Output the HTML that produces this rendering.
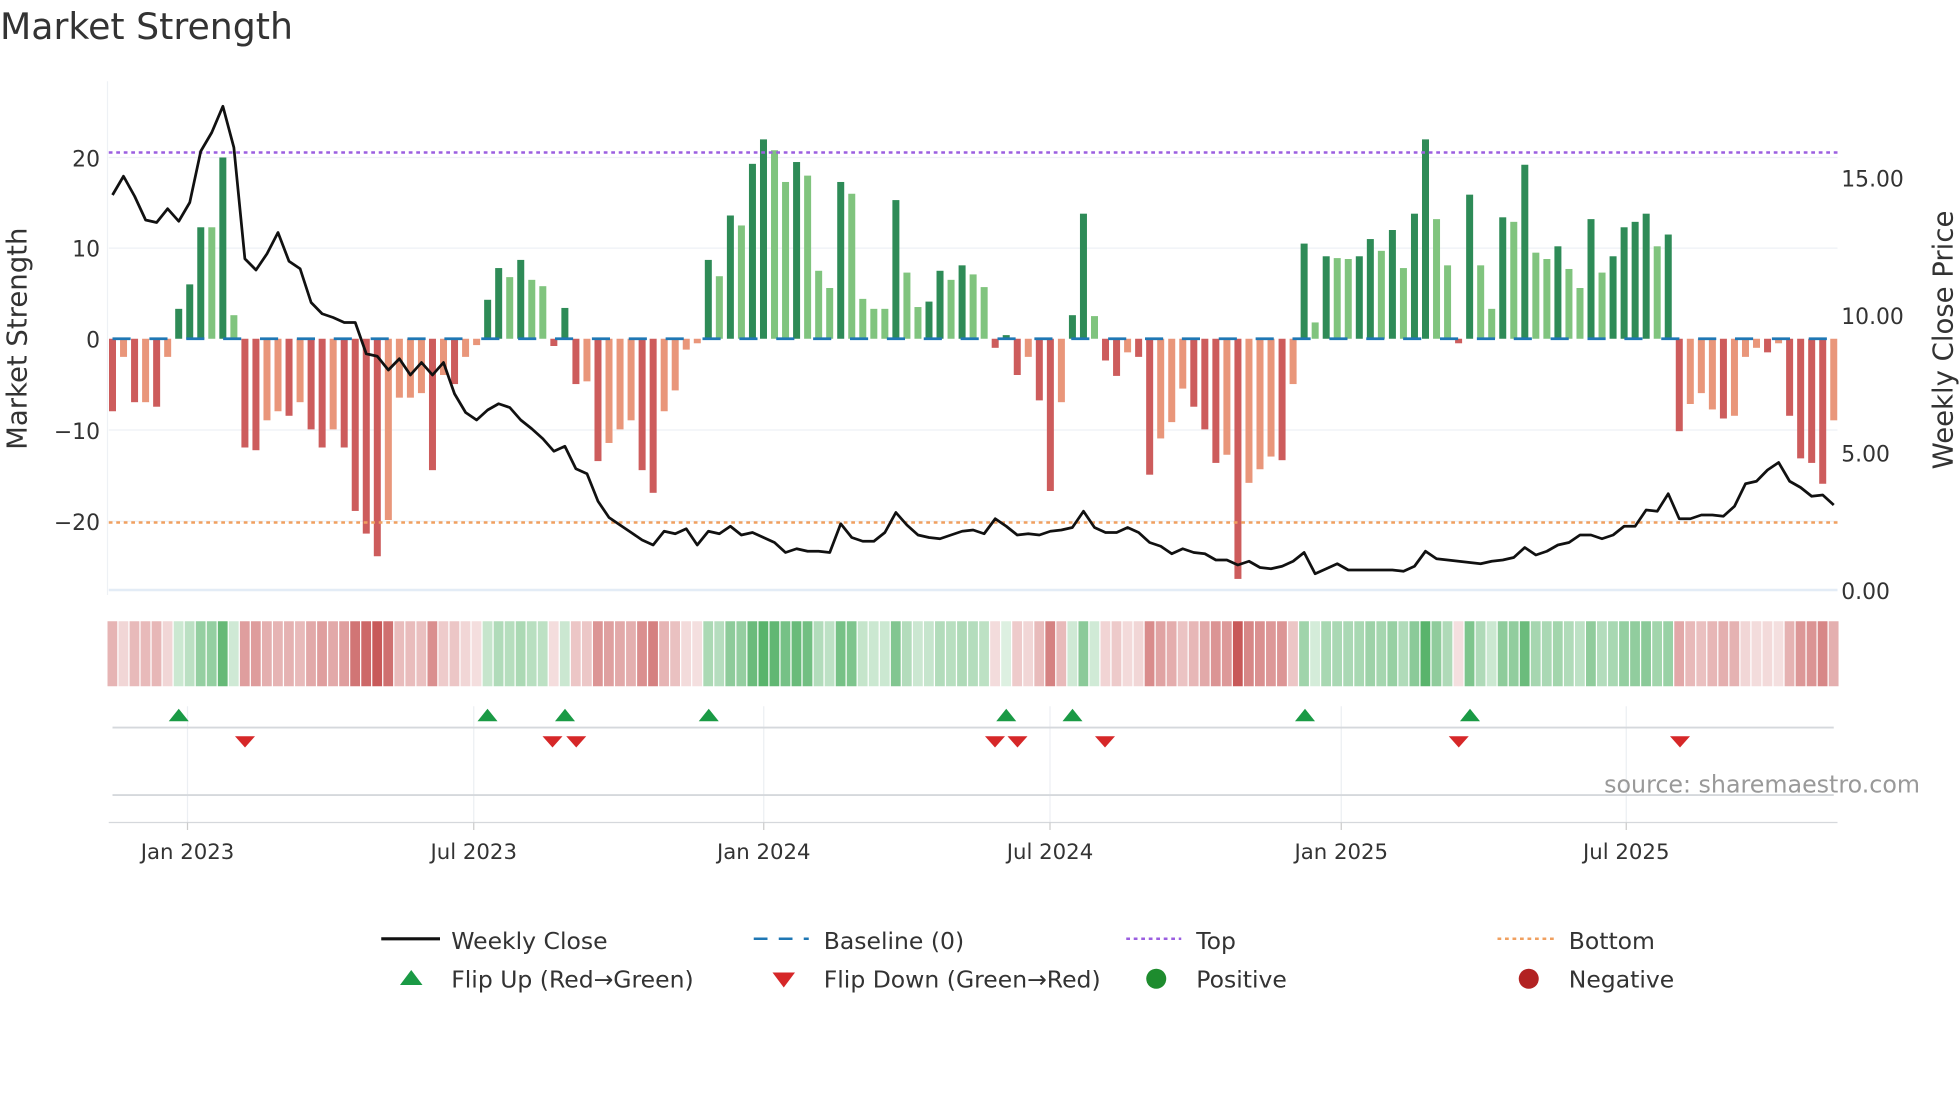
<!DOCTYPE html>
<html><head><meta charset="utf-8"><style>
html,body{margin:0;padding:0;background:#fff;width:1960px;height:1102px;overflow:hidden}
svg{display:block}
text{font-family:"DejaVu Sans","Liberation Sans",sans-serif;fill:#333}
</style></head><body>
<svg id="s" width="1960" height="1102" viewBox="0 0 1568 881.6" xmlns="http://www.w3.org/2000/svg">
<rect width="1568" height="882" fill="#fff"/>
<text x="0" y="31" font-size="29">Market Strength</text>
<g id="grid" stroke="#eef1f5" stroke-width="1">
<line x1="87" x2="1470" y1="126" y2="126"/><line x1="87" x2="1470" y1="198.5" y2="198.5"/>
<line x1="87" x2="1470" y1="344" y2="344"/><line x1="87" x2="1470" y1="417" y2="417"/>
<line x1="87" x2="1470" y1="472" y2="472" stroke="#e3ecf6" stroke-width="2"/>
<line x1="86" x2="86" y1="65" y2="476"/>
</g>
<g font-size="17.5" text-anchor="end">
<text x="80" y="133">20</text><text x="80" y="205">10</text><text x="80" y="278">0</text>
<text x="80" y="351">−10</text><text x="80" y="424">−20</text>
</g>
<g font-size="17.5">
<text x="1473" y="149">15.00</text><text x="1473" y="259">10.00</text><text x="1473" y="369">5.00</text><text x="1473" y="479">0.00</text>
</g>
<text transform="translate(21,271) rotate(-90)" font-size="22" text-anchor="middle">Market Strength</text>
<text transform="translate(1562,272) rotate(-90)" font-size="22" text-anchor="middle">Weekly Close Price</text>
<g id="bars"></g>
<line x1="87" x2="1470" y1="122" y2="122" stroke="#9b5fe0" stroke-width="2" stroke-dasharray="3,3"/>
<line x1="87" x2="1470" y1="418" y2="418" stroke="#f0a060" stroke-width="2" stroke-dasharray="3,3"/>
<polyline id="price" fill="none" stroke="#111" stroke-width="2.2" stroke-linejoin="round"/>
<g id="heat"></g>
<g stroke="#eceff3" stroke-width="1">
<line x1="150" x2="150" y1="565" y2="658"/><line x1="379" x2="379" y1="565" y2="658"/><line x1="611" x2="611" y1="565" y2="658"/>
<line x1="840" x2="840" y1="565" y2="658"/><line x1="1073" x2="1073" y1="565" y2="658"/><line x1="1301" x2="1301" y1="565" y2="658"/>
</g>
<line x1="90" x2="1467" y1="582" y2="582" stroke="#d5d8dc" stroke-width="1.5"/>
<line x1="90" x2="1467" y1="636" y2="636" stroke="#d5d8dc" stroke-width="1.5"/>
<line x1="87" x2="1470" y1="658" y2="658" stroke="#d5d8dc" stroke-width="1"/>
<g id="marks"></g>
<text x="1536" y="634" font-size="19" text-anchor="end" style="fill:#999">source: sharemaestro.com</text>
<g font-size="16" text-anchor="middle" stroke="#ccc">
<line x1="150" x2="150" y1="658" y2="664"/><line x1="379" x2="379" y1="658" y2="664"/><line x1="611" x2="611" y1="658" y2="664"/>
<line x1="840" x2="840" y1="658" y2="664"/><line x1="1073" x2="1073" y1="658" y2="664"/><line x1="1301" x2="1301" y1="658" y2="664"/>
</g>
<g font-size="17" text-anchor="middle">
<text x="150" y="687">Jan 2023</text><text x="379" y="687">Jul 2023</text><text x="611" y="687">Jan 2024</text>
<text x="840" y="687">Jul 2024</text><text x="1073" y="687">Jan 2025</text><text x="1301" y="687">Jul 2025</text>
</g>
<g font-size="18.8">
<line x1="305" x2="352" y1="751" y2="751" stroke="#111" stroke-width="2.5"/>
<text x="361" y="759">Weekly Close</text>
<line x1="603" x2="647" y1="751" y2="751" stroke="#1f77b4" stroke-width="2" stroke-dasharray="11,9"/>
<text x="659" y="759">Baseline (0)</text>
<line x1="901" x2="945" y1="751" y2="751" stroke="#9b5fe0" stroke-width="2" stroke-dasharray="3,3"/>
<text x="957" y="759">Top</text>
<line x1="1198" x2="1243" y1="751" y2="751" stroke="#f0a060" stroke-width="2" stroke-dasharray="3,3"/>
<text x="1255" y="759">Bottom</text>
<polygon points="320,788 338,788 329,776" fill="#1a9a45"/>
<text x="361" y="790">Flip Up (Red→Green)</text>
<polygon points="618,778 636,778 627,790" fill="#d62728"/>
<text x="659" y="790">Flip Down (Green→Red)</text>
<circle cx="925" cy="783" r="8" fill="#1e8c2e"/>
<text x="957" y="790">Positive</text>
<circle cx="1223" cy="783" r="8" fill="#b22222"/>
<text x="1255" y="790">Negative</text>
</g>
</svg>
<script>
var V=[[-8,1],[-2,0],[-7,1],[-7,0],[-7.5,1],[-2,0],[3.3,1],[6,1],[12.3,1],[12.3,0],[20,1],[2.6,0],[-12,1],[-12.3,1],[-9,0],[-8,0],[-8.5,1],[-7,0],[-10,1],[-12,1],[-10,0],[-12,1],[-19,1],[-21.5,1],[-24,1],[-20,0],[-6.5,0],[-6.5,0],[-6,0],[-14.5,1],[-4,0],[-5,1],[-2,0],[-0.7,0],[4.3,1],[7.8,1],[6.8,0],[8.7,1],[6.5,0],[5.8,0],[-0.8,1],[3.4,1],[-5,1],[-4.7,0],[-13.5,1],[-11.5,0],[-10,0],[-9,0],[-14.5,1],[-17,1],[-8,0],[-5.7,0],[-1.2,0],[-0.5,0],[8.7,1],[6.9,0],[13.6,1],[12.5,0],[19.3,1],[22,1],[20.8,0],[17.3,0],[19.5,1],[18,0],[7.5,0],[5.6,0],[17.3,1],[16,0],[4.4,0],[3.3,0],[3.3,0],[15.3,1],[7.3,0],[3.5,0],[4.1,1],[7.5,1],[6.5,0],[8.1,1],[7.1,0],[5.7,0],[-1,1],[0.4,1],[-4,1],[-2,0],[-6.8,1],[-16.8,1],[-7,0],[2.6,1],[13.8,1],[2.5,0],[-2.4,1],[-4.1,1],[-1.5,0],[-2,1],[-15,1],[-11,0],[-9.2,0],[-5.5,0],[-7.5,1],[-10,1],[-13.7,1],[-12.8,0],[-26.5,1],[-15.9,0],[-14.4,0],[-13,0],[-13.4,1],[-5,0],[10.5,1],[1.8,0],[9.1,1],[8.9,0],[8.8,0],[9.1,1],[11,1],[9.7,0],[12,1],[7.8,0],[13.8,1],[22,1],[13.2,0],[8.1,0],[-0.5,1],[15.9,1],[8.1,0],[3.3,0],[13.4,1],[12.9,0],[19.2,1],[9.5,0],[8.8,0],[10.2,1],[7.7,0],[5.6,0],[13.2,1],[7.3,0],[9.1,1],[12.3,1],[12.9,1],[13.8,1],[10.2,0],[11.5,1],[-10.2,1],[-7.2,0],[-6,0],[-7.8,0],[-8.8,1],[-8.5,0],[-2,0],[-1,0],[-1.5,1],[-0.5,0],[-8.5,1],[-13.2,1],[-13.7,1],[-16,1],[-9,0]];
var P=[156,141,157,176,178,167,177,162,121,106,85,118,207,216,203,186,209,215,242,251,254,258,258,283,285,296,287,300,290,300,290,315,330,336,328,323,326,336,343,351,361,357,375,379,401,414,420,426,432,436,425,427,423,436,425,427,421,428,426,430,434,442,439,441,441,442,419,430,433,433,426,410,420,428,430,431,428,425,424,427,415,421,428,427,428,425,424,422,409,422,426,426,422,426,434,437,443,439,442,443,448,448,452,449,454,455,453,449,442,459,455,451,456,456,456,456,456,457,453,441,447,448,449,450,451,449,448,446,438,444,441,436,434,428,428,431,428,421,421,408,409,395,415,415,412,412,413,405,387,385,376,370,385,390,397,396,404];
var n=V.length,x0=90,step=(1467-90)/(n-1),ns="http://www.w3.org/2000/svg";
function el(t,a,p){var e=document.createElementNS(ns,t);for(var k in a)e.setAttribute(k,a[k]);p.appendChild(e);return e;}
var B=document.getElementById('bars'),H=document.getElementById('heat'),M=document.getElementById('marks');
var pts=[];
for(var i=0;i<n;i++){var v=V[i][0],d=V[i][1],x=x0+i*step,h=Math.abs(v)*7.25;
var c=v>=0?(d?'#2e8b57':'#80c47e'):(d?'#cd5c5c':'#e9967a');
el('rect',{x:x-2.8,y:v>=0?271-h:271,width:5.6,height:Math.max(h,0.8),fill:c},B);
var a=0.15+0.7*Math.min(Math.abs(v),24)/24;
var col=v>=0?'rgba(46,160,70,'+a+')':'rgba(190,60,60,'+a+')';
el('rect',{x:x-4,y:497,width:step-1,height:52,fill:col},H);
pts.push(x.toFixed(1)+','+(P[i]||404));}
for(var x=90;x<1468;x+=29.5)el('line',{x1:x,x2:x+14.5,y1:271,y2:271,stroke:'#1f77b4','stroke-width':2.2},B);
document.getElementById('price').setAttribute('points',pts.join(' '));
[143,390,452,567,805,858,1044,1176].forEach(function(x){el('polygon',{points:(x-8)+',577 '+(x+8)+',577 '+x+',567',fill:'#1a9a45'},M);});
[196,442,461,796,814,884,1167,1344].forEach(function(x){el('polygon',{points:(x-8)+',589 '+(x+8)+',589 '+x+',598',fill:'#d62728'},M);});
</script>
</body></html>
